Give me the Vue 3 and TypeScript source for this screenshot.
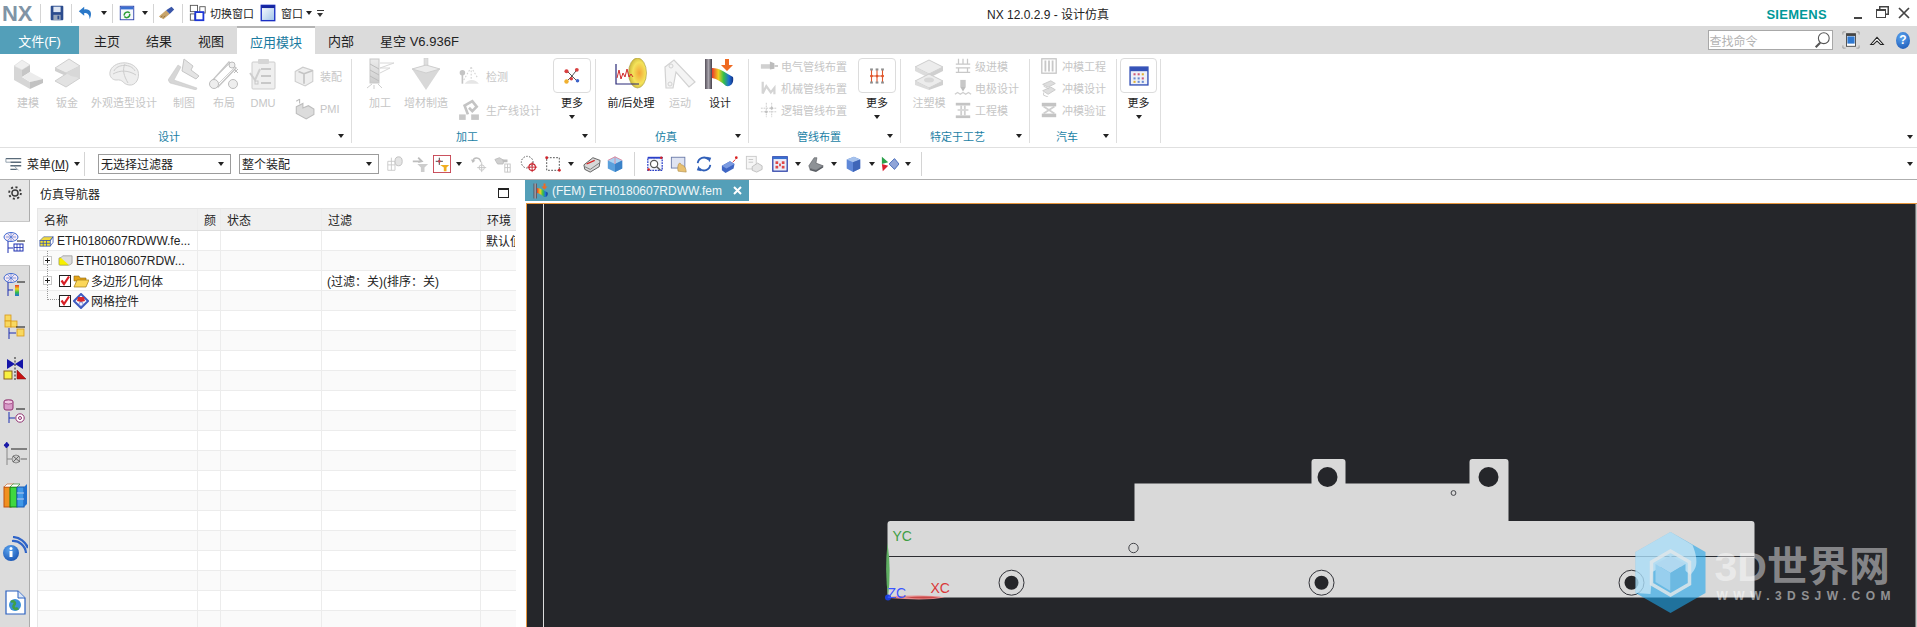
<template>
  <div class="nx">
    <!-- icon sheet -->
    <svg class="sheet" width="0" height="0">
      <defs>
        <linearGradient id="gWin" x1="0" y1="0" x2="1" y2="1"><stop offset="0" stop-color="#fff" /><stop offset="1" stop-color="#9fc3e8" /></linearGradient>
        <linearGradient id="gGrey" x1="0" y1="0" x2="0" y2="1"><stop offset="0" stop-color="#ececec" /><stop offset="1" stop-color="#cdcdcd" /></linearGradient>
        <linearGradient id="gRain" x1="0" y1="0" x2="1" y2="0"><stop offset="0" stop-color="#e8382a" /><stop offset=".3" stop-color="#f0d020" /><stop offset=".55" stop-color="#35c04a" /><stop offset=".8" stop-color="#1f6fd8" /><stop offset="1" stop-color="#12307f" /></linearGradient>
        <linearGradient id="gRainV" x1="0" y1="0" x2="0" y2="1"><stop offset="0" stop-color="#e8382a" /><stop offset=".35" stop-color="#f0d020" /><stop offset=".65" stop-color="#35c04a" /><stop offset="1" stop-color="#1f6fd8" /></linearGradient>
        <linearGradient id="gBar" x1="0" y1="0" x2="1" y2="0"><stop offset="0" stop-color="#55505a" /><stop offset=".5" stop-color="#a8a4ac" /><stop offset="1" stop-color="#45404a" /></linearGradient>
        <radialGradient id="gYel" cx=".6" cy=".5" r=".6"><stop offset="0" stop-color="#f4a638" /><stop offset=".6" stop-color="#f4e35a" /><stop offset="1" stop-color="#c8b23a" /></radialGradient>
        <radialGradient id="gInfo" cx=".4" cy=".3" r=".8"><stop offset="0" stop-color="#5aa4ef" /><stop offset="1" stop-color="#1550b0" /></radialGradient>
      </defs>

      <!-- big ribbon icons, 32 box -->
      <symbol id="b-model" viewBox="0 0 32 32">
        <polygon points="2,8 10,2 18,7 10,12" fill="#efefef" stroke="#d0d0d0" stroke-width=".5" />
        <polygon points="2,8 10,12 10,19 18,24 18,31 2,22" fill="#d6d6d6" />
        <polygon points="10,12 18,7 18,14 10,19" fill="#c6c6c6" />
        <polygon points="10,19 18,14 31,21 18,24" fill="#ececec" />
        <polygon points="18,24 31,21 31,25 18,31" fill="#c2c2c2" />
      </symbol>
      <symbol id="b-sheet" viewBox="0 0 32 32">
        <polygon points="4,10 18,1 29,8 15,15" fill="#eaeaea" stroke="#cfcfcf" />
        <polygon points="4,10 15,15 15,18 4,13" fill="#cfcfcf" />
        <polygon points="4,23 18,14 29,20 15,29" fill="#e2e2e2" stroke="#cfcfcf" />
        <polygon points="15,15 29,8 29,20 20,18" fill="#d8d8d8" />
      </symbol>
      <symbol id="b-shape" viewBox="0 0 32 32">
        <path d="M2,14 C4,3 25,1 30,13 C32,20 28,28 21,27 C14,26 16,21 8,22 C5,22 1,19 2,14 Z" fill="#eee" stroke="#cfcfcf" />
        <path d="M6,13 C9,6 23,5 27,13 M5,16 C12,12 20,12 28,17 M17,6 C14,12 16,18 20,25" fill="none" stroke="#cdcdcd" />
      </symbol>
      <symbol id="b-draft" viewBox="0 0 32 32">
        <polygon points="16,1 25,8 23,12 31,18 28,21 14,13" fill="#e4e4e4" stroke="#c6c6c6" />
        <polygon points="0,22 10,7 13,9 6,22 29,30 28,32 2,25" fill="#d6d6d6" stroke="#c4c4c4" stroke-width=".5" />
      </symbol>
      <symbol id="b-layout" viewBox="0 0 32 32">
        <path d="M4,23 L21,4 L28,10 L10,29 Z" fill="none" stroke="#c4c4c4" stroke-width="1.5" />
        <path d="M7,20 L21,6 M10,26 L26,10" fill="none" stroke="#d2d2d2" />
        <circle cx="6" cy="26" r="4.5" fill="#eee" stroke="#bcbcbc" /><circle cx="24" cy="7" r="3" fill="#eee" stroke="#bcbcbc" /><circle cx="25" cy="26" r="4.5" fill="#eee" stroke="#bcbcbc" />
        <path d="M26,11 l4,4 m0,-4 l-4,4" stroke="#bdbdbd" />
      </symbol>
      <symbol id="b-dmu" viewBox="0 0 32 32">
        <rect x="5" y="4" width="23" height="27" rx="1" fill="#efefef" stroke="#cdcdcd" />
        <rect x="11" y="1" width="11" height="5" rx="1" fill="#d6d6d6" />
        <path d="M14,11 h10 M14,18 h10 M14,25 h10" stroke="#c8c8c8" stroke-width="2" />
        <path d="M3,15 l5,7 l5,-11" fill="none" stroke="#cfcfcf" stroke-width="2" />
        <rect x="8" y="23" width="3" height="3" fill="none" stroke="#c8c8c8" />
      </symbol>
      <symbol id="b-mill" viewBox="0 0 32 32">
        <rect x="6" y="1" width="9" height="24" fill="url(#gGrey)" stroke="#c8c8c8" />
        <path d="M6,6 l9,5 M6,12 l9,5 M6,18 l9,5" stroke="#bcbcbc" />
        <path d="M16,5 h14 l-14,5 h10 l-10,5" fill="none" stroke="#d8d8d8" />
        <path d="M3,30 l5,-4 M18,30 l-4,-4 M10,31 v-4" stroke="#cfcfcf" />
      </symbol>
      <symbol id="b-additive" viewBox="0 0 32 32">
        <polygon points="2,11 16,7 30,11 16,32" fill="#d8d8d8" />
        <polygon points="2,11 16,7 30,11 16,15" fill="#ececec" stroke="#cfcfcf" />
        <rect x="14" y="0" width="4" height="7" fill="#dedede" stroke="#c8c8c8" stroke-width=".5" />
      </symbol>
      <symbol id="b-more1" viewBox="0 0 32 32">
        <path d="M16,16 L8,8 M16,16 L23,7 M16,16 L8,24 M16,16 L24,24" stroke="#333" stroke-width="1.2" />
        <circle cx="8" cy="9" r="3" fill="#d84040" /><circle cx="23" cy="7" r="2.8" fill="#d84040" /><circle cx="8" cy="24" r="3.2" fill="#f0b030" /><circle cx="24" cy="23" r="2.6" fill="#3d62c8" /><circle cx="15" cy="20" r="2.6" fill="#d84040" />
      </symbol>
      <symbol id="b-post" viewBox="0 0 32 32">
        <ellipse cx="22.5" cy="15" rx="9" ry="15" fill="url(#gYel)" stroke="#a89a3c" stroke-width=".6" />
        <path d="M1,6 V26 H24" fill="none" stroke="#2a2a78" stroke-width="1.2" />
        <path d="M2,20 l2,-8 l2,9 l2,-6 l2,4 l2,-8 l2,8 l2,-3 l2,3" fill="none" stroke="#d22a2a" />
      </symbol>
      <symbol id="b-motion" viewBox="0 0 32 32">
        <path d="M1,9 L10,2 L31,24 L25,29 L12,14 L9,30 H2 Z" fill="#f4f4f4" stroke="#d2d2d2" stroke-width="1.2" />
        <circle cx="7" cy="8" r="2" fill="none" stroke="#d2d2d2" /><circle cx="6" cy="26" r="2" fill="none" stroke="#d2d2d2" />
      </symbol>
      <symbol id="b-sim" viewBox="0 0 32 32">
        <rect x="1" y="1" width="7" height="30" fill="url(#gBar)" />
        <path d="M8,10 C16,10 22,15 29,19 C30,24 28,29 22,28 C18,24 13,21 8,20 Z" fill="url(#gRain)" />
        <path d="M21,1 h4 v6 h4 l-6,6 l-6,-6 h4 Z" fill="#ef6a22" />
      </symbol>
      <symbol id="b-more2" viewBox="0 0 32 32">
        <path d="M8,6 V26 M16,6 V26 M24,6 V26 M6,16 H26" stroke="#e0552a" stroke-width="1.6" />
        <g fill="#8e8e8e"><rect x="6" y="5" width="4" height="3" /><rect x="14" y="5" width="4" height="3" /><rect x="22" y="5" width="4" height="3" /><rect x="6" y="24" width="4" height="3" /><rect x="14" y="24" width="4" height="3" /><rect x="22" y="24" width="4" height="3" /></g>
        <g fill="#e0552a"><circle cx="8" cy="16" r="2" /><circle cx="16" cy="16" r="2" /><circle cx="24" cy="16" r="2" /></g>
      </symbol>
      <symbol id="b-mold" viewBox="0 0 32 32">
        <polygon points="2,9 16,2 30,9 16,16" fill="#ececec" stroke="#cdcdcd" /><polygon points="2,9 16,16 16,20 2,13" fill="#dcdcdc" /><polygon points="30,9 16,16 16,20 30,13" fill="#d0d0d0" />
        <polygon points="2,23 16,16 30,23 16,30" fill="#ececec" stroke="#cdcdcd" /><polygon points="2,23 16,30 16,32 2,27" fill="#dcdcdc" /><polygon points="30,23 16,30 16,32 30,27" fill="#d0d0d0" />
        <ellipse cx="16" cy="22" rx="5" ry="2.5" fill="#d8d8d8" />
      </symbol>
      <symbol id="b-more3" viewBox="0 0 32 32">
        <rect x="3" y="3" width="26" height="26" fill="#eef1f8" stroke="#3552b8" stroke-width="2" />
        <rect x="3" y="3" width="26" height="6" fill="#3552b8" />
        <g fill="#d05a78"><rect x="8" y="12" width="3" height="3" /><rect x="14" y="12" width="3" height="3" /><rect x="20" y="18" width="3" height="3" /></g>
        <g fill="#e0b030"><rect x="20" y="12" width="3" height="3" /><rect x="8" y="23" width="3" height="3" /></g>
        <g fill="#6a8ad0"><rect x="8" y="18" width="3" height="3" /><rect x="14" y="18" width="3" height="3" /><rect x="14" y="23" width="3" height="3" /><rect x="20" y="23" width="3" height="3" /></g>
      </symbol>

      <!-- small ribbon icons, 20 box, greyed out -->
      <symbol id="s-asm" viewBox="0 0 20 20">
        <polygon points="2,6 9,2 18,5 18,15 11,19 2,15" fill="#eee" stroke="#cdcdcd" /><path d="M5,6 l5,2 v9 M10,8 l8,-3" fill="none" stroke="#c4c4c4" stroke-width="1.5" />
      </symbol>
      <symbol id="s-pmi" viewBox="0 0 20 20">
        <polygon points="3,8 9,5 9,9 14,7 19,10 19,15 12,19 3,14" fill="#dcdcdc" stroke="#bdbdbd" /><path d="M3,3 l3,-2 M6,1 v4" stroke="#bdbdbd" />
      </symbol>
      <symbol id="s-insp" viewBox="0 0 20 20">
        <circle cx="4" cy="7" r="2.5" fill="#c4c4c4" /><path d="M4,9 v8" stroke="#c4c4c4" stroke-width="1.5" />
        <path d="M6,17 A8,8 0 0 1 19,17 Z" fill="#e6e6e6" /><path d="M12,2 V14 M12,2 L5,14 M12,2 L18,12" stroke="#d4d4d4" stroke-dasharray="1.5 1.5" fill="none" />
      </symbol>
      <symbol id="s-line" viewBox="0 0 20 20">
        <rect x="1" y="14" width="6" height="5" fill="#c8c8c8" /><rect x="12" y="14" width="7" height="5" fill="#c8c8c8" />
        <path d="M9,14 L6,6 L13,2 L17,7 L13,11 L10,8" fill="none" stroke="#c4c4c4" stroke-width="2.4" />
      </symbol>
      <symbol id="s-elec" viewBox="0 0 20 20"><rect x="1" y="8" width="12" height="5" fill="#d0d0d0" /><polygon points="11,5 16,7 16,13 11,14" fill="#bcbcbc" /><path d="M16,10 h4" stroke="#c8c8c8" stroke-width="2" /></symbol>
      <symbol id="s-mech" viewBox="0 0 20 20"><path d="M3,3 V16 L7,8 L12,15 L16,10 V17" fill="none" stroke="#d4d4d4" stroke-width="2.5" /></symbol>
      <symbol id="s-logic" viewBox="0 0 20 20"><path d="M1,8 H18 M1,12 H18 M7,2 V18 M13,2 V18" stroke="#c8c8c8" stroke-dasharray="2 1" fill="none" /><circle cx="7" cy="12" r="1.5" fill="#c0c0c0" /><circle cx="13" cy="8" r="1.5" fill="#c0c0c0" /></symbol>
      <symbol id="s-prog" viewBox="0 0 20 20"><path d="M2,8 H18 M2,12 H18 M2,17 H18 M5,2 V8 M10,2 V8 M15,2 V8 M5,12 V17 M15,12 V17" stroke="#c8c8c8" stroke-width="1.4" /></symbol>
      <symbol id="s-elect" viewBox="0 0 20 20"><rect x="7" y="1" width="6" height="8" fill="#c8c8c8" /><polygon points="7,9 13,9 10,14" fill="#bdbdbd" /><path d="M1,17 l3,-2 l3,2 l3,-2 l3,2 l3,-2 l3,2" fill="none" stroke="#cfcfcf" stroke-width="1.5" /></symbol>
      <symbol id="s-eng" viewBox="0 0 20 20"><rect x="2" y="2" width="16" height="3" fill="#c4c4c4" /><rect x="2" y="16" width="16" height="3" fill="#c4c4c4" /><rect x="7" y="5" width="2" height="11" fill="#cfcfcf" /><rect x="11" y="5" width="2" height="11" fill="#cfcfcf" /><rect x="4" y="9" width="12" height="2" fill="#d8d8d8" /></symbol>
      <symbol id="s-die" viewBox="0 0 20 20"><rect x="2" y="2" width="16" height="16" fill="none" stroke="#c4c4c4" stroke-width="1.4" /><path d="M6,4 V16 M10,4 V16 M14,4 V16" stroke="#c8c8c8" stroke-width="2" /></symbol>
      <symbol id="s-dies" viewBox="0 0 20 20"><polygon points="3,6 12,2 17,5 9,9" fill="#dedede" stroke="#c8c8c8" /><polygon points="3,13 12,9 17,12 9,17" fill="#dedede" stroke="#c8c8c8" /><path d="M4,8 l6,3 M4,15 v3 l5,2" stroke="#c8c8c8" fill="none" /></symbol>
      <symbol id="s-diev" viewBox="0 0 20 20"><rect x="2" y="2" width="16" height="4" fill="#c4c4c4" /><rect x="2" y="14" width="16" height="4" fill="#c4c4c4" /><path d="M4,6 L16,14 M16,6 L4,14" stroke="#d0d0d0" stroke-width="2" /></symbol>

      <!-- quick access and toolbar, 20 box -->
      <symbol id="q-save" viewBox="0 0 20 20"><rect x="3" y="2" width="14" height="16" rx="1" fill="#2c4c8e" /><rect x="6" y="3" width="8" height="6" fill="#dfe6f2" /><rect x="6" y="12" width="8" height="6" fill="#9aa7bb" /><rect x="10.5" y="13" width="2" height="4" fill="#2c4c8e" /></symbol>
      <symbol id="q-undo" viewBox="0 0 20 20"><path d="M2,8 L8,3 V6 C14,5 18,9 14,17 C14,12 12,10 8,10 V13 Z" fill="#2a78c8" /></symbol>
      <symbol id="q-refresh" viewBox="0 0 20 20"><rect x="2.5" y="2.5" width="15" height="15" fill="#f6f8fd" stroke="#2a3fa8" /><rect x="3" y="3" width="14" height="3" fill="#3a6fd0" /><path d="M7,13 a3.5,3.5 0 0 1 6,-3 M13,11 a3.5,3.5 0 0 1 -6,3" fill="none" stroke="#2a9d35" stroke-width="1.6" /></symbol>
      <symbol id="q-brush" viewBox="0 0 20 20"><polygon points="1,14 9,7 13,11 6,17" fill="#c9a56a" /><polygon points="9,7 15,3 18,6 13,11" fill="#3a56a8" /><path d="M3,15 l2,-2 M6,15 l2,-2" stroke="#8a6a3a" /></symbol>
      <symbol id="q-switch" viewBox="0 0 20 20"><rect x="1.5" y="1.5" width="8" height="7" fill="#fff" stroke="#555" /><rect x="12" y="3" width="6" height="7" fill="#fff" stroke="#555" /><rect x="1.5" y="11" width="5" height="7" fill="#fff" stroke="#555" /><rect x="7" y="9" width="9" height="9" fill="#fff" stroke="#1d36d6" stroke-width="2" /></symbol>
      <symbol id="q-window" viewBox="0 0 20 20"><rect x="2.5" y="1.5" width="15" height="17" fill="url(#gWin)" stroke="#1a2fc4" stroke-width="1.5" /><rect x="2.5" y="1.5" width="15" height="3" fill="#16269e" /></symbol>
      <symbol id="t-menu" viewBox="0 0 20 20"><path d="M1,4 H18 M6,8 H18 M6,12 H18 M6,16 H13" stroke="#5a6b7a" stroke-width="1.6" /><path d="M1,4 V8 H6 M10,12 l5,5" stroke="#8a98a6" fill="none" /></symbol>
      <symbol id="t-1" viewBox="0 0 20 20"><path d="M2,7 h8 v10 h-8 Z M6,3 v14 M2,11 h8" fill="none" stroke="#c8c8c8" /><ellipse cx="14" cy="7" rx="4" ry="5" fill="#e4e4e4" stroke="#bdbdbd" /></symbol>
      <symbol id="t-2" viewBox="0 0 20 20"><path d="M2,7 H12 M8,3 L12,7 L8,8" fill="none" stroke="#bdbdbd" stroke-width="2" /><polygon points="7,10 19,10 15,14 15,19 11,19 11,14" fill="#cdcdcd" /></symbol>
      <symbol id="t-3" viewBox="0 0 20 20"><rect x=".5" y=".5" width="19" height="19" fill="#fff" stroke="#c5404e" /><path d="M7,3 V11 M3,7 H11" stroke="#333" /><circle cx="7" cy="7" r="1.5" fill="#c5404e" /><polygon points="8,11 18,11 15,14 15,18 12,18 12,14" fill="#f0ad1f" /></symbol>
      <symbol id="t-4" viewBox="0 0 20 20"><path d="M3,7 C4,2 11,2 12,8" fill="none" stroke="#bdbdbd" stroke-width="1.5" /><path d="M1,5 L3,9 L6,6" fill="#bdbdbd" /><path d="M13,8 V19 M8,14 H18" stroke="#c4c4c4" /><circle cx="13" cy="14" r="3" fill="none" stroke="#c4c4c4" /></symbol>
      <symbol id="t-5" viewBox="0 0 20 20"><path d="M1,5 l5,-2 l5,3 l-1,4 l-6,0 Z" fill="#cfcfcf" stroke="#bcbcbc" /><path d="M9,5 h6 v3 h-5" fill="#bcbcbc" /><rect x="12" y="10" width="6" height="9" fill="#fff" stroke="#c4c4c4" /><path d="M12,14 h6 M15,10 v9" stroke="#c4c4c4" /></symbol>
      <symbol id="t-6" viewBox="0 0 20 20"><circle cx="8" cy="8" r="6.5" fill="none" stroke="#444" stroke-dasharray="1.6 1.6" /><circle cx="13.5" cy="13.5" r="3.6" fill="none" stroke="#c8222c" stroke-width="1.3" /><path d="M13.5,8 V19 M8,13.5 H19" stroke="#c8222c" /></symbol>
      <symbol id="t-7" viewBox="0 0 20 20"><rect x="3" y="3" width="14" height="14" fill="none" stroke="#444" stroke-dasharray="2 1.5" /><g fill="#d0252c"><circle cx="3" cy="3" r="1.6" /><circle cx="17" cy="17" r="1.6" /></g></symbol>
      <symbol id="t-8" viewBox="0 0 20 20"><polygon points="1,11 11,3 19,6 18,13 8,19 2,16" fill="#d8d8d8" stroke="#555" /><path d="M4,10 L13,6" stroke="#d82020" stroke-width="1.4" /><path d="M2,13 l6,3 l10,-7" fill="none" stroke="#777" /></symbol>
      <symbol id="t-9" viewBox="0 0 20 20"><polygon points="2,6 10,2 18,6 18,15 10,19 2,15" fill="#5aa0dc" /><polygon points="2,6 10,10 18,6 10,2" fill="#a8d0f0" /><polygon points="10,10 18,6 18,15 10,19" fill="#3a82c8" /><path d="M2,6 l8,-4 l8,4 M10,2 V10" fill="none" stroke="#e08aa0" /></symbol>
      <symbol id="t-10" viewBox="0 0 20 20"><rect x="2" y="3" width="16" height="14" fill="#f4f6fc" stroke="#2a3fc8" stroke-dasharray="2 1" stroke-width="1.4" /><rect x="2" y="2" width="16" height="2" fill="#2a3fc8" /><circle cx="9" cy="10" r="4" fill="#fff" stroke="#555" stroke-width="1.3" /><path d="M12,13 l4,4" stroke="#555" stroke-width="1.6" /><circle cx="17" cy="3" r="1.4" fill="#d82020" /><circle cx="3" cy="16" r="1.4" fill="#d82020" /></symbol>
      <symbol id="t-11" viewBox="0 0 20 20"><rect x="1.5" y="2.5" width="15" height="12" fill="#dfe4f2" stroke="#6a7aa8" /><path d="M9,18 C8,14 9,9 11,9 C12,9 12,11 13,11 C15,11 18,14 18,19 Z" fill="#e8c070" stroke="#a88440" stroke-width=".6" /></symbol>
      <symbol id="t-12" viewBox="0 0 20 20"><path d="M3,9 A7,7 0 0 1 15,5 M17,11 A7,7 0 0 1 5,15" fill="none" stroke="#2f5fb8" stroke-width="2" /><polygon points="13,2 18,3 16,8" fill="#2f5fb8" /><polygon points="7,18 2,17 4,12" fill="#2f5fb8" /></symbol>
      <symbol id="t-13" viewBox="0 0 20 20"><polygon points="1,12 10,7 15,10 14,15 5,20 1,17" fill="#3f66c4" /><polygon points="1,12 10,7 15,10 6,15" fill="#7a9ae0" /><circle cx="17" cy="3" r="1.5" fill="#d82020" /><path d="M13,8 l3,-3" stroke="#d82020" /></symbol>
      <symbol id="t-14" viewBox="0 0 20 20"><rect x="1.5" y="1.5" width="11" height="14" fill="#f6f6f6" stroke="#c8c8c8" /><path d="M4,5 h5 M4,8 h5" stroke="#c4c4c4" /><polygon points="8,13 14,9 19,12 19,16 13,19 8,17" fill="#e6e6e6" stroke="#bdbdbd" /></symbol>
      <symbol id="t-15" viewBox="0 0 20 20"><rect x="2" y="2" width="16" height="16" fill="#eaeefa" stroke="#2a3fa8" stroke-width="1.4" /><rect x="2" y="2" width="16" height="2.5" fill="#3a6fd0" /><g fill="#e04848"><rect x="5" y="7" width="3" height="3" /><rect x="12" y="7" width="3" height="3" /><rect x="5" y="12" width="3" height="3" /><rect x="12" y="12" width="3" height="3" /><rect x="9" y="9.5" width="2" height="3" /></g></symbol>
      <symbol id="t-16" viewBox="0 0 20 20"><polygon points="2,12 8,3 11,3 10,9 18,12 10,17 3,15" fill="#8e9296" stroke="#4c4f54" stroke-width=".6" /><path d="M3,15 l7,2 l8,-5 v2 l-8,5 l-7,-2 Z" fill="#5a5e64" /></symbol>
      <symbol id="t-17" viewBox="0 0 20 20"><polygon points="3,5 11,2 18,5 18,15 10,19 3,15" fill="#5f88d8" /><polygon points="3,5 11,2 18,5 10,8" fill="#a6c2ec" /><polygon points="10,8 18,5 18,15 10,19" fill="#3f66b8" /></symbol>
      <symbol id="t-18" viewBox="0 0 20 20"><polygon points="9,10 15,4 20,10 15,16" fill="#8fa4d8" stroke="#3f66b8" /><polygon points="1,2 8,8 1,10" fill="#2aa04a" /><polygon points="1,10 8,12 2,18" fill="#d82030" /></symbol>
      <symbol id="w-search" viewBox="0 0 20 20"><circle cx="12" cy="8" r="6" fill="#fff" stroke="#555" stroke-width="1.2" /><path d="M8,13 L3,18" stroke="#555" stroke-width="2.4" /></symbol>
      <symbol id="w-fit" viewBox="0 0 20 20"><rect x="5" y="3" width="10" height="14" fill="#fff" stroke="#444" /><rect x="6" y="6" width="8" height="8" fill="#2f78d0" /><rect x="5" y="3" width="10" height="2.5" fill="#444" /><path d="M1,4 V1 H4 M16,1 H19 V4 M1,16 V19 H4 M16,19 H19 V16" fill="none" stroke="#999" /></symbol>
      <symbol id="w-up" viewBox="0 0 20 20"><path d="M3,15 L10,7 L17,15 L14,15 L10,11 L6,15 Z" fill="#fff" stroke="#222" stroke-width="1.2" /></symbol>

      <!-- navigator tree, 16 box -->
      <symbol id="n-fem" viewBox="0 0 16 16"><polygon points="1,8 5,4 15,4 12,8" fill="#f0d840" stroke="#3050b0" stroke-width=".6" /><rect x="1" y="8" width="11" height="6" fill="#f0e030" stroke="#3050b0" stroke-width=".8" /><path d="M4.5,8 V14 M8,8 V14 M1,11 H12 M12,8 L15,4 V10 L12,14" fill="none" stroke="#3050b0" stroke-width=".8" /></symbol>
      <symbol id="n-part" viewBox="0 0 16 16"><rect x="1" y="5" width="11" height="8" rx="1" fill="#f8f000" stroke="#8a8a60" stroke-width=".7" /><path d="M3,5 L5,3 H15 V11 L12,13" fill="#dcdcdc" stroke="#8a8a8a" stroke-width=".7" /></symbol>
      <symbol id="n-check" viewBox="0 0 12 12"><rect x=".5" y=".5" width="11" height="11" fill="#fff" stroke="#222" /><path d="M2.5,5.5 L5,9 L10,1.5" fill="none" stroke="#d81f26" stroke-width="2.2" /></symbol>
      <symbol id="n-folder" viewBox="0 0 16 16"><path d="M1,3 H6 L7,5 H13 V8 H1 Z" fill="#e4a418" stroke="#8a6410" stroke-width=".6" /><path d="M1,14 L4,7 H16 L13,14 Z" fill="#fbd75a" stroke="#a07812" stroke-width=".7" /></symbol>
      <symbol id="n-mesh" viewBox="0 0 16 16"><polygon points="8,1 15,8 8,15 1,8" fill="none" stroke="#3d5ac0" stroke-width="2" /><polygon points="5,4 11,4 12,8 8,9 4,8" fill="#d8282c" /><circle cx="8" cy="11" r="2" fill="#f0f0ff" stroke="#3d5ac0" stroke-width=".6" /></symbol>

      <!-- resource bar, 26 box -->
      <symbol id="r-gear" viewBox="0 0 26 26"><circle cx="13" cy="13" r="5" fill="none" stroke="#3a3a3a" stroke-width="2.4" /><circle cx="13" cy="13" r="9.5" fill="none" stroke="#3a3a3a" stroke-width="3" stroke-dasharray="3.4 4" /></symbol>
      <symbol id="r-fem" viewBox="0 0 26 26"><ellipse cx="9" cy="6" rx="7" ry="4.5" fill="#f4e8f4" stroke="#3f6ad0" /><path d="M4,6 L14,6 M9,2 V10 M6,3 L12,9 M12,3 L6,9" stroke="#3f6ad0" stroke-width=".6" /><path d="M15,10 H23" stroke="#111" /><path d="M6,10 V22 M6,17 H11" stroke="#1c2fb0" /><rect x="12" y="13" width="9" height="7" fill="#fff" stroke="#1c2fb0" /><path d="M15,13 V20 M18,13 V20 M12,16.5 H21" stroke="#1c2fb0" stroke-width=".8" /></symbol>
      <symbol id="r-res" viewBox="0 0 26 26"><ellipse cx="9" cy="6" rx="7" ry="4.5" fill="#f4e8f4" stroke="#3f6ad0" /><path d="M4,6 L14,6 M9,2 V10 M6,3 L12,9 M12,3 L6,9" stroke="#3f6ad0" stroke-width=".6" /><path d="M15,10 H23" stroke="#111" /><path d="M6,10 V24 M6,18 H11" stroke="#1c2fb0" /><rect x="13" y="13" width="4" height="11" fill="url(#gRainV)" /></symbol>
      <symbol id="r-asm" viewBox="0 0 26 26"><g fill="#f8d860" stroke="#d89818" stroke-width=".8"><rect x="3" y="1" width="6" height="6" /><rect x="3" y="7" width="6" height="6" /><rect x="9" y="7" width="6" height="6" /><rect x="15" y="15" width="7" height="7" /></g><path d="M14,13 H23" stroke="#111" /><path d="M7,14 V25 M7,19 H14" stroke="#1c2fb0" /></symbol>
      <symbol id="r-bc" viewBox="0 0 26 26"><polygon points="5,3 13,8 5,13" fill="#1414a8" /><polygon points="21,3 13,8 21,13" fill="#1414a8" /><path d="M13,1 V25" stroke="#222" stroke-dasharray="2 1.5" /><rect x="2" y="15" width="8" height="8" fill="#f8f040" stroke="#8a6020" /><polygon points="15,14 24,23 15,23" fill="#c81010" stroke="#7a0c0c" stroke-width=".5" /></symbol>
      <symbol id="r-sol" viewBox="0 0 26 26"><rect x="2" y="1" width="9" height="10" rx="2" fill="#d89ac8" stroke="#903070" /><ellipse cx="6.5" cy="3" rx="4.5" ry="2" fill="#f0c8e4" stroke="#903070" stroke-width=".7" /><path d="M14,10 H23" stroke="#111" /><path d="M7,13 V24 M7,19 H13" stroke="#1c2fb0" /><circle cx="18" cy="19" r="4.2" fill="#fff" stroke="#903070" /><circle cx="18" cy="19" r="1.5" fill="none" stroke="#903070" /></symbol>
      <symbol id="r-sys" viewBox="0 0 26 26"><path d="M2,4 H7 M4.5,1 L7,4 L4.5,7 L2,4" fill="#1a1aa8" stroke="#1a1aa8" /><path d="M5,7 V24 M5,18 H10" stroke="#888" /><path d="M9,8 H25" stroke="#222" /><circle cx="14" cy="18" r="4" fill="#ccc" stroke="#888" /><path d="M11,15 l7,6 M17,15 l-6,6 M19,18 H25" stroke="#666" /></symbol>
      <symbol id="r-lib" viewBox="0 0 26 26"><rect x="2" y="4" width="7" height="20" fill="#f09020" stroke="#c05010" /><rect x="8" y="4" width="7" height="20" fill="#40d840" stroke="#108010" /><rect x="15" y="4" width="7" height="20" fill="#3f98e8" stroke="#1858b0" /><polygon points="2,4 5,1 12,1 9,4" fill="#fff" stroke="#c05010" stroke-width=".6" /><polygon points="8,4 11,1 18,1 15,4" fill="#fff" stroke="#108010" stroke-width=".6" /><polygon points="22,4 25,1 25,21 22,24" fill="#2070d0" /><path d="M15,10 h7 M15,16 h7" stroke="#bce" /></symbol>
      <symbol id="r-info" viewBox="0 0 26 26"><path d="M10,5 A13,13 0 0 1 24,17 M11,1 A17,17 0 0 1 26,12" fill="none" stroke="#2f64c8" stroke-width="2.2" /><circle cx="9" cy="17" r="8" fill="url(#gInfo)" /><circle cx="9" cy="12.5" r="1.5" fill="#fff" /><rect x="7.5" y="15" width="3" height="6" fill="#fff" /></symbol>
      <symbol id="r-web" viewBox="0 0 26 26"><path d="M4,1 H16 L23,8 V24 H4 Z" fill="#fff" stroke="#2a60c0" stroke-width="1.2" /><path d="M16,1 V8 H23" fill="#dce8f8" stroke="#2a60c0" /><circle cx="13" cy="15" r="6" fill="#3a90d8" /><path d="M9,12 C12,10 14,13 12,15 C10,18 14,20 16,18" fill="none" stroke="#40a048" stroke-width="2.6" /></symbol>
    </svg>

    <!-- title bar -->
    <header class="titlebar">
      <span class="nx-logo">NX</span>
      <span v-for="(it, n) in quick" :key="n" class="slot" :style="{ width: it.w + 'px' }">
        <i v-if="it.k === 'd'" class="dd"></i>
        <i v-else-if="it.k === 's'" class="sep"></i>
        <i v-else-if="it.k === 'o'" class="dd-over"></i>
        <span v-else-if="it.t" class="quick-text">{{ it.t }}</span>
        <svg v-else width="18" height="18"><use :href="'#' + it.i" /></svg>
      </span>
      <span class="app-title">NX 12.0.2.9 - 设计仿真</span>
      <span class="siemens">SIEMENS</span>
      <span class="win win-min"></span>
      <span class="win win-restore"></span>
      <svg class="win-close" width="12" height="12" viewBox="0 0 12 12"><path d="M1,1 L11,11 M11,1 L1,11" stroke="#444" stroke-width="1.7" /></svg>
    </header>

    <!-- ribbon tabs -->
    <nav class="tabbar">
      <span class="file-tab">文件(F)</span>
      <span v-for="t in tabs" :key="t" class="tab" :class="{ active: t === '应用模块' }">{{ t }}</span>
      <div class="tab-right">
        <div class="find">
          <span>查找命令</span>
          <svg width="18" height="18"><use href="#w-search" /></svg>
        </div>
        <svg class="tab-ic" width="18" height="18"><use href="#w-fit" /></svg>
        <svg class="tab-ic" width="18" height="18"><use href="#w-up" /></svg>
        <span class="help">?</span>
      </div>
    </nav>

    <!-- ribbon -->
    <section class="ribbon">
      <div v-for="g in groups" :key="g.id" class="group" :style="{ width: g.w + 'px', paddingLeft: g.pad + 'px' }">
        <div class="group-body">
          <template v-for="(c, n) in g.cols" :key="n">
            <div v-if="c.k === 'big'" class="big" :class="{ off: c.off }" :style="{ width: c.w + 'px' }">
              <svg width="32" height="32"><use :href="'#' + c.i" /></svg>
              <span class="big-label">{{ c.t }}</span>
            </div>
            <div v-else-if="c.k === 'more'" class="more" :style="{ width: c.w + 'px', marginLeft: c.ml + 'px' }">
              <span class="more-box"><svg width="22" height="22"><use :href="'#' + c.i" /></svg></span>
              <span class="big-label">更多</span>
              <i class="dd"></i>
            </div>
            <div v-else class="stack" :style="{ marginLeft: c.ml + 'px', paddingTop: c.top + 'px' }">
              <div v-for="r in c.rows" :key="r.t" class="stack-row" :style="{ height: c.h + 'px' }">
                <span class="stack-ic" :style="{ width: c.iw + 'px', marginRight: c.gap + 'px' }">
                  <svg :width="c.is" :height="c.is"><use :href="'#' + r.i" /></svg>
                </span>
                <span>{{ r.t }}</span>
              </div>
            </div>
          </template>
        </div>
        <div v-if="g.label" class="group-foot">
          <span class="group-label">{{ g.label }}</span>
          <span class="foot-dd"><i class="dd"></i></span>
        </div>
      </div>
      <i class="dd ribbon-dd"></i>
    </section>

    <!-- selection bar -->
    <section class="selbar">
      <svg class="sel-menu-ic" width="18" height="18"><use href="#t-menu" /></svg>
      <span class="menu-text">菜单(<u>M</u>)</span>
      <i class="dd menu-dd"></i>
      <i class="sep menu-sep"></i>
      <div class="combo combo-a"><span>无选择过滤器</span><i class="dd"></i></div>
      <div class="combo combo-b"><span>整个装配</span><i class="dd"></i></div>
      <span v-for="(it, n) in tools" :key="n" class="slot" :style="{ width: it.w + 'px' }">
        <i v-if="it.k === 'd'" class="dd"></i>
        <i v-else-if="it.k === 's'" class="sep tall"></i>
        <svg v-else width="18" height="18"><use :href="'#' + it.i" /></svg>
      </span>
      <i class="dd sel-end"></i>
    </section>

    <main class="work">
      <!-- resource bar -->
      <aside class="rail">
        <div class="rail-gear"><svg width="16" height="16"><use href="#r-gear" /></svg></div>
        <div class="rail-active"><svg width="26" height="26"><use href="#r-fem" /></svg></div>
        <svg v-for="r in rail" :key="r.i" class="rail-ic" width="26" height="26" :style="{ marginTop: r.m + 'px' }"><use :href="'#' + r.i" /></svg>
      </aside>

      <!-- navigator -->
      <section class="navi">
        <div class="navi-head">
          <span>仿真导航器</span>
          <i class="navi-max"></i>
        </div>
        <div class="tree">
          <div class="tr th">
            <span class="c c1">名称</span><span class="c c2">颜</span><span class="c c3">状态</span><span class="c c4">过滤</span><span class="c c5">环境</span>
          </div>
          <div class="tr">
            <span class="c c1 cell-name"><svg class="n-root" width="15" height="15"><use href="#n-fem" /></svg><span>ETH0180607RDWW.fe...</span></span>
            <span class="c c2"></span><span class="c c3"></span><span class="c c4"></span><span class="c c5">默认值</span>
          </div>
          <div class="tr alt">
            <span class="c c1 cell-name"><i class="plus"></i><svg class="n-part" width="15" height="15"><use href="#n-part" /></svg><span>ETH0180607RDW...</span></span>
            <span class="c c2"></span><span class="c c3"></span><span class="c c4"></span><span class="c c5"></span>
          </div>
          <div class="tr">
            <span class="c c1 cell-name"><i class="plus"></i><svg class="n-chk" width="12" height="12"><use href="#n-check" /></svg><svg class="n-ico" width="16" height="16"><use href="#n-folder" /></svg><span>多边形几何体</span></span>
            <span class="c c2"></span><span class="c c3"></span><span class="c c4">(过滤：关)(排序：关)</span><span class="c c5"></span>
          </div>
          <div class="tr alt">
            <span class="c c1 cell-name"><i class="plus none"></i><svg class="n-chk" width="12" height="12"><use href="#n-check" /></svg><svg class="n-ico" width="16" height="16"><use href="#n-mesh" /></svg><span>网格控件</span></span>
            <span class="c c2"></span><span class="c c3"></span><span class="c c4"></span><span class="c c5"></span>
          </div>
          <div v-for="n in 16" :key="n" class="tr" :class="{ alt: n % 2 === 0 }">
            <span class="c c1"></span><span class="c c2"></span><span class="c c3"></span><span class="c c4"></span><span class="c c5"></span>
          </div>
          <i class="dots"></i>
        </div>
      </section>

      <!-- graphics window -->
      <section class="gfx">
        <div class="gfx-tabs">
          <div class="gfx-tab">
            <svg width="16" height="16"><use href="#b-sim" /></svg>
            <span>(FEM) ETH0180607RDWW.fem</span>
            <svg class="gfx-x" width="9" height="9" viewBox="0 0 9 9"><path d="M1,1 L8,8 M8,1 L1,8" stroke="#fff" stroke-width="2" /></svg>
          </div>
        </div>
        <div class="canvas">
          <svg width="1390" height="423" viewBox="526.5 204 1390 423">
            <path d="M1916,204 V627" stroke="#c8c8c8" stroke-width="2" />
            <path d="M887,524 q0,-3 3,-3 H1134 V483.5 H1311 V462 q0,-3 3,-3 H1342 q3,0 3,3 V483.5 H1469 V462 q0,-3 3,-3 H1505 q3,0 3,3 V521 H1751 q3,0 3,3 V597.5 H887 Z" fill="#d9d9d9" />
            <path d="M887,556.5 H1754" stroke="#2c2d32" stroke-width="1" />
            <circle cx="1327" cy="477" r="10" fill="#25262a" />
            <circle cx="1488" cy="477" r="10" fill="#25262a" />
            <circle cx="1133" cy="548" r="4.7" fill="none" stroke="#44454a" />
            <circle cx="1453" cy="493" r="2.4" fill="none" stroke="#44454a" />
            <g v-for="x in holes" :key="x">
              <circle :cx="x" cy="582.7" r="12.5" fill="none" stroke="#33343a" />
              <circle :cx="x" cy="582.7" r="7" fill="#25262a" />
            </g>
            <!-- WCS -->
            <path d="M887,543 Q891,570 887.5,597 Q884,570 887,543 Z" fill="#5fae62" />
            <path d="M888,597 Q925,594 944,597.5 Q925,601 888,598 Z" fill="#e58a8a" />
            <path d="M905,597.5 Q925,595.5 938,597.5 Q925,599.5 905,597.5 Z" fill="#c84a4a" />
            <circle cx="887.5" cy="597.5" r="3" fill="#1c3fd8" />
            <text class="wcs" x="892" y="541" fill="#3f9e44">YC</text>
            <text class="wcs" x="930" y="593" fill="#d9383a">XC</text>
            <text class="wcs" x="887" y="598" fill="#3b56ff">ZC</text>
            <!-- site watermark -->
            <polygon points="1670,532 1705,552 1705,593 1670,613 1635,593 1635,552" fill="#1ea5eb" fill-opacity=".6" />
            <path d="M1670,532 L1692,545 C1700,565 1694,570 1690,575 L1672,560 L1652,572 L1650,594 L1635,593 L1635,552 Z" fill="#fff" fill-opacity=".5" />
            <polygon points="1670,551 1689,562 1689,584 1670,595 1651,584 1651,562" fill="none" stroke="#dfe6ea" stroke-width="3.5" stroke-opacity=".85" />
            <polygon points="1670,556 1685,564 1670,573 1655,564" fill="#b0d8f0" />
            <polygon points="1655,564 1670,573 1670,591 1655,582" fill="#98cfee" />
            <polygon points="1685,564 1670,573 1670,591 1685,582" fill="#6cb9e2" />
            <text class="wm-big" x="1714" y="581">3D世界网</text>
            <text class="wm-small" x="1716" y="600" textLength="174" lengthAdjust="spacing">WWW.3DSJW.COM</text>
          </svg>
        </div>
      </section>
    </main>
  </div>
</template>

<script setup lang="ts">
type Slot = { w: number; k?: 'd' | 's' | 'o'; i?: string; t?: string }
type Col =
  | { k: 'big'; i: string; t: string; w: number; off?: boolean }
  | { k: 'more'; i: string; w: number; ml: number }
  | { k: 'stack'; ml: number; top: number; h: number; iw: number; is: number; gap: number; rows: { i: string; t: string }[] }

const quick: Slot[] = [
  { w: 8, k: 's' }, { w: 26, i: 'q-save' }, { w: 2, k: 's' }, { w: 28, i: 'q-undo' }, { w: 8, k: 'd' }, { w: 8, k: 's' },
  { w: 22, i: 'q-refresh' }, { w: 14, k: 'd' }, { w: 2, k: 's' }, { w: 26, i: 'q-brush' }, { w: 5, k: 's' },
  { w: 25, i: 'q-switch' }, { w: 44, t: '切换窗口' }, { w: 27, i: 'q-window' }, { w: 22, t: '窗口' }, { w: 11, k: 'd' }, { w: 13, k: 'o' },
]

const tabs = ['主页', '结果', '视图', '应用模块', '内部', '星空 V6.936F']

const groups: { id: string; w: number; pad: number; label?: string; cols: Col[] }[] = [
  {
    id: 'design', w: 352, pad: 8, label: '设计',
    cols: [
      { k: 'big', i: 'b-model', t: '建模', w: 40, off: true },
      { k: 'big', i: 'b-sheet', t: '钣金', w: 38, off: true },
      { k: 'big', i: 'b-shape', t: '外观造型设计', w: 76, off: true },
      { k: 'big', i: 'b-draft', t: '制图', w: 44, off: true },
      { k: 'big', i: 'b-layout', t: '布局', w: 36, off: true },
      { k: 'big', i: 'b-dmu', t: 'DMU', w: 42, off: true },
      { k: 'stack', ml: 9, top: 4, h: 33, iw: 22, is: 22, gap: 5, rows: [{ i: 's-asm', t: '装配' }, { i: 's-pmi', t: 'PMI' }] },
    ],
  },
  {
    id: 'mfg', w: 244, pad: 8, label: '加工',
    cols: [
      { k: 'big', i: 'b-mill', t: '加工', w: 40, off: true },
      { k: 'big', i: 'b-additive', t: '增材制造', w: 52, off: true },
      { k: 'stack', ml: 6, top: 4, h: 34, iw: 22, is: 22, gap: 6, rows: [{ i: 's-insp', t: '检测' }, { i: 's-line', t: '生产线设计' }] },
      { k: 'more', i: 'b-more1', w: 38, ml: 12 },
    ],
  },
  {
    id: 'sim', w: 153, pad: 9, label: '仿真',
    cols: [
      { k: 'big', i: 'b-post', t: '前/后处理', w: 52 },
      { k: 'big', i: 'b-motion', t: '运动', w: 46, off: true },
      { k: 'big', i: 'b-sim', t: '设计', w: 34 },
    ],
  },
  {
    id: 'route', w: 152, pad: 10, label: '管线布置',
    cols: [
      { k: 'stack', ml: 0, top: 0, h: 22, iw: 20, is: 18, gap: 2, rows: [{ i: 's-elec', t: '电气管线布置' }, { i: 's-mech', t: '机械管线布置' }, { i: 's-logic', t: '逻辑管线布置' }] },
      { k: 'more', i: 'b-more2', w: 38, ml: 11 },
    ],
  },
  {
    id: 'proc', w: 129, pad: 6, label: '特定于工艺',
    cols: [
      { k: 'big', i: 'b-mold', t: '注塑模', w: 44, off: true },
      { k: 'stack', ml: 2, top: 0, h: 22, iw: 20, is: 18, gap: 2, rows: [{ i: 's-prog', t: '级进模' }, { i: 's-elect', t: '电极设计' }, { i: 's-eng', t: '工程模' }] },
    ],
  },
  {
    id: 'auto', w: 87, pad: 9, label: '汽车',
    cols: [
      { k: 'stack', ml: 0, top: 0, h: 22, iw: 20, is: 18, gap: 3, rows: [{ i: 's-die', t: '冲模工程' }, { i: 's-dies', t: '冲模设计' }, { i: 's-diev', t: '冲模验证' }] },
    ],
  },
  { id: 'more', w: 44, pad: 3, cols: [{ k: 'more', i: 'b-more3', w: 37, ml: 0 }] },
]

const tools: Slot[] = [
  { w: 25, i: 't-1' }, { w: 25, i: 't-2' }, { w: 19, i: 't-3' }, { w: 15, k: 'd' }, { w: 25, i: 't-4' }, { w: 23, i: 't-5' },
  { w: 29, i: 't-6' }, { w: 19, i: 't-7' }, { w: 17, k: 'd' }, { w: 25, i: 't-8' }, { w: 21, i: 't-9' }, { w: 18, k: 's' },
  { w: 23, i: 't-10' }, { w: 25, i: 't-11' }, { w: 25, i: 't-12' }, { w: 27, i: 't-13' }, { w: 21, i: 't-14' }, { w: 31, i: 't-15' },
  { w: 5, k: 'd' }, { w: 31, i: 't-16' }, { w: 5, k: 'd' }, { w: 33, i: 't-17' }, { w: 5, k: 'd' }, { w: 31, i: 't-18' }, { w: 5, k: 'd' }, { w: 22, k: 's' },
]

const rail = [
  { i: 'r-res', m: 6 }, { i: 'r-asm', m: 15.5 }, { i: 'r-bc', m: 16 }, { i: 'r-sol', m: 17 },
  { i: 'r-sys', m: 16.5 }, { i: 'r-lib', m: 15.5 }, { i: 'r-info', m: 27.5 }, { i: 'r-web', m: 28 },
]

const holes = [1011, 1321, 1631]
</script>

<style>
html, body { margin: 0; background: #fff; overflow: hidden; }
</style>

<style scoped>
.nx {
  width: 1917px;
  height: 627px;
  overflow: hidden;
  display: flex;
  flex-direction: column;
  background: #fff;
  color: #222;
  font: 12px "Liberation Sans", "Noto Sans CJK SC", sans-serif;
}
.sheet { position: absolute; }
svg { display: block; flex-shrink: 0; }
i { display: block; flex-shrink: 0; }
.slot { display: flex; align-items: center; justify-content: center; flex-shrink: 0; }
.dd { width: 0; height: 0; border-left: 3.5px solid transparent; border-right: 3.5px solid transparent; border-top: 4px solid #222; }
.sep { width: 1px; height: 19px; background: #d4d4d4; }
.sep.tall { height: 24px; }

.titlebar { height: 26px; display: flex; align-items: center; flex-shrink: 0; }
.nx-logo { width: 36px; padding-left: 2px; box-sizing: border-box; font-size: 22px; font-weight: 700; color: #8094a6; line-height: 26px; letter-spacing: -.2px; margin-top: 1px; }
.quick-text { font-size: 11px; white-space: nowrap; }
.dd-over { width: 7px; height: 6px; border-top: 1px solid #333; position: relative; }
.dd-over::after { content: ""; position: absolute; left: 0; top: 2px; border-left: 3.5px solid transparent; border-right: 3.5px solid transparent; border-top: 4px solid #333; }
.app-title { margin-left: 660px; white-space: nowrap; color: #222; }
.siemens { margin-left: auto; font-size: 13px; font-weight: 700; color: #009999; letter-spacing: .3px; margin-top: 3px; }
.win { display: block; flex-shrink: 0; }
.win-min { width: 8px; height: 2px; background: #444; margin: 10px 0 0 27px; }
.win-restore { width: 10px; height: 9px; border: 1.5px solid #444; border-top-width: 2px; margin: 0 0 0 14px; box-sizing: border-box; box-shadow: 3px -3px 0 -1.5px #fff, 3px -3px 0 0 #444; }
.win-close { margin: -1px 7px 0 12px; }

.tabbar { height: 28px; background: #dbdbdb; display: flex; align-items: stretch; flex-shrink: 0; font-size: 13px; }
.file-tab { width: 79px; margin-right: 2px; background: #539fb9; color: #fff; display: flex; align-items: center; justify-content: center; }
.tab { padding: 0 13px; display: flex; align-items: center; white-space: nowrap; color: #222; }
.tab.active { background: #fff; color: #1c7ba0; border-top: 2px solid #b4b4b4; box-sizing: border-box; }
.tab-right { margin-left: auto; display: flex; align-items: center; padding-right: 7px; }
.find { width: 125px; height: 20px; box-sizing: border-box; border: 1px solid #a8a8a8; background: #fff; display: flex; align-items: center; justify-content: space-between; padding: 0 1px; font-size: 12px; color: #b2b2b2; margin-right: 9px; }
.tab-ic + .tab-ic { margin-left: 8.5px; }
.help { width: 14px; height: 17px; margin-left: 10px; border-radius: 50%; background: radial-gradient(circle at 40% 30%, #5aa4ef, #1550b0); color: #fff; font-size: 12px; font-weight: 700; line-height: 17px; text-align: center; }

.ribbon { height: 94px; padding-top: 5px; box-sizing: border-box; display: flex; border-bottom: 1px solid #e0e0e0; flex-shrink: 0; font-size: 11px; position: relative; }
.group { box-sizing: border-box; height: 84px; display: flex; flex-direction: column; border-right: 1px solid #dedede; }
.group-body { height: 75px; margin-top: -4px; display: flex; }
.big { display: flex; flex-direction: column; align-items: center; padding-top: 3px; white-space: nowrap; flex-shrink: 0; }
.big.off { color: #c6c6c6; }
.big-label { line-height: 16px; margin-top: 5px; }
.more { display: flex; flex-direction: column; align-items: center; padding-top: 3px; flex-shrink: 0; white-space: nowrap; }
.more-box { width: 100%; height: 35px; box-sizing: border-box; border: 1px solid #dcdcdc; border-radius: 4px; display: flex; align-items: center; justify-content: center; }
.more .big-label { margin-top: 2px; }
.more .dd { margin-top: 4px; }
.stack { display: flex; flex-direction: column; color: #c6c6c6; flex-shrink: 0; }
.stack-row { display: flex; align-items: center; white-space: nowrap; }
.stack-ic { display: flex; justify-content: center; }
.group-foot { height: 14px; display: flex; align-items: center; }
.group-label { flex: 1; text-align: center; color: #1b7fa5; }
.foot-dd { width: 21px; display: flex; justify-content: center; }
.ribbon-dd { position: absolute; right: 4px; top: 81px; }

.selbar { height: 32px; flex-shrink: 0; display: flex; align-items: center; border-bottom: 1px solid #aeaeae; box-sizing: border-box; }
.sel-menu-ic { margin-left: 5px; }
.menu-text { margin-left: 4px; white-space: nowrap; width: 42px; }
.menu-dd { margin-left: 5px; }
.menu-sep { height: 24px; margin-left: 4px; }
.combo { height: 20px; box-sizing: border-box; border: 1px solid #9c9c9c; background: #fff; display: flex; align-items: center; justify-content: space-between; padding: 0 6px 0 2px; flex-shrink: 0; }
.combo-a { width: 133px; margin-left: 13px; }
.combo-b { width: 140px; margin: 0 3px 0 8px; }
.sel-end { margin-left: auto; margin-right: 4px; }

.work { flex: 1; min-height: 0; display: flex; }
.rail { width: 30px; box-sizing: border-box; flex-shrink: 0; background: #dcdcdc; border-right: 1px solid #acacac; display: flex; flex-direction: column; align-items: center; }
.rail-gear { width: 100%; height: 41px; flex-shrink: 0; display: flex; align-items: center; justify-content: center; padding-bottom: 15px; box-sizing: border-box; background: #e6e6e6; }
.rail-active { width: 30px; height: 45px; flex-shrink: 0; background: #fff; display: flex; align-items: center; justify-content: center; box-sizing: border-box; align-self: flex-start; border-top: 1px solid #c8c8c8; border-bottom: 1px solid #c8c8c8; }

.navi { width: 495px; flex-shrink: 0; overflow: hidden; }
.navi-head { height: 28px; display: flex; align-items: center; justify-content: space-between; padding: 0 16px 2px 10px; box-sizing: border-box; color: #222; }
.navi-max { width: 11px; height: 10px; box-sizing: border-box; border: 1px solid #222; border-top-width: 2px; }
.tree { margin-left: 7px; width: 478px; border: 1px solid #e6e6e6; border-width: 1px 0 0 1px; position: relative; }
.tr { display: flex; height: 20px; box-sizing: border-box; border-bottom: 1px solid #ececec; }
.tr.alt { background: #fafafa; }
.tr.th { height: 22px; background: #f0f0f0; border-bottom-color: #dedede; }
.c { display: flex; align-items: center; box-sizing: border-box; border-right: 1px solid #ececec; padding-left: 5px; white-space: nowrap; overflow: hidden; flex-shrink: 0; color: #222; }
.th .c { padding-left: 6px; }
.c1 { width: 160px; }
.c2 { width: 23px; }
.c3 { width: 101px; }
.c4 { width: 159px; }
.c5 { width: 34px; border-right: 0; }
.cell-name { padding-left: 0; }
.n-root { margin: 0 3px 0 1px; }
.plus { width: 9px; height: 9px; box-sizing: border-box; border: 1px solid #c8c8c8; background: linear-gradient(#222, #222) center / 5px 1px no-repeat, linear-gradient(#222, #222) center / 1px 5px no-repeat, #fff; margin-left: 5px; position: relative; z-index: 1; }
.plus.none { border: 0; background: none; }
.n-part { margin: 0 3px 0 6px; }
.n-chk { margin-left: 7px; }
.n-ico { margin: 0 2px 0 2px; }
.dots { position: absolute; left: 9px; top: 42px; width: 12px; height: 49px; box-sizing: border-box; border-left: 1px dotted #999; border-bottom: 1px dotted #999; }

.gfx { flex: 1; min-width: 0; display: flex; flex-direction: column; }
.gfx-tabs { height: 23px; flex-shrink: 0; }
.gfx-tab { width: 224px; height: 21px; background: #549fb8; color: #f2f7f9; display: flex; align-items: center; padding-left: 8px; box-sizing: border-box; white-space: nowrap; gap: 3px; }
.gfx-x { margin-left: 8px; }
.canvas { margin-left: 1px; flex: 1; min-height: 0; background: #25262a; border-top: 1px solid #e8963c; border-left: 1px solid #e8963c; box-sizing: border-box; overflow: hidden; }
.canvas svg { background: linear-gradient(#dcdcdc, #dcdcdc) 16px 0 / 1px 100% no-repeat; }
.wcs { font: 14px "Liberation Sans", sans-serif; }
.wm-big { font: 700 41px "Liberation Sans", "Noto Sans CJK SC", sans-serif; fill: #fff; fill-opacity: .45; }
.wm-small { font: 700 12px "Liberation Sans", sans-serif; fill: #fff; fill-opacity: .5; }
</style>
